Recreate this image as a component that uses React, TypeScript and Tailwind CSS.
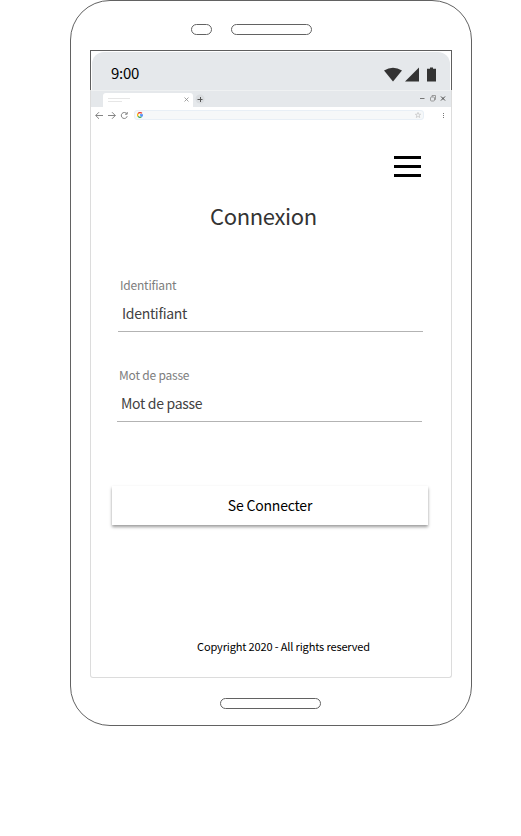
import React from "react";

function StatusBar() {
  return (
    <div className="h-[40px] border border-b-0 border-[#5e5e5e] bg-white pt-px pl-px pr-px">
      <div className="flex h-[38px] items-center rounded-t-[12px] bg-[#e5e8eb] pr-[13px] pl-[19px]">
        <span className="pt-[4px] font-['Noto_Sans_CJK_SC',sans-serif] text-[15px] leading-5 tracking-[-0.3px] text-black">9:00</span>
        <svg className="mt-[7px] ml-auto" width="53" height="15" viewBox="0 0 53 15" fill="#333">
          <path d="M0 3.5 Q9 -2.2 18 3.5 L9 14.5 Z" />
          <path d="M21 14.5 L35 .5 V14.5 Z" />
          <path d="M43 1.7 H46 V.5 H49 V1.7 H52 V14.5 H43 Z" />
        </svg>
      </div>
    </div>
  );
}

function BrowserBar() {
  return (
    <div className="flex h-[33px] flex-col">
      <div className="flex h-[17px] border-t border-[#eff1f2] bg-[#e5e8eb]">
        <div className="mt-[2px] ml-[12px] flex h-[14px] w-[90px] rounded-t-[3px] bg-white pt-[5px] pr-[4px] pl-[5px]">
          <div>
            <div className="h-px w-[22px] bg-[#e6e6e6]" />
            <div className="mt-[2px] h-px w-[14px] bg-[#e6e6e6]" />
          </div>
          <svg className="-mt-px ml-auto" width="5" height="5" viewBox="0 0 5 5" stroke="#8b8b8b" strokeWidth=".8">
            <path d="M.5 .5 L4.5 4.5 M4.5 .5 L.5 4.5" />
          </svg>
        </div>
        <svg className="mt-[3px] ml-[2px]" width="10" height="10" viewBox="0 0 10 10">
          <circle cx="5" cy="5" r="4.5" fill="#dadde0" />
          <path d="M2.5 5.5 H7.5 M5.5 3 V8" stroke="#555" />
        </svg>
        <svg className="mt-[3px] mr-[5px] ml-auto" width="27" height="9" viewBox="0 0 27 9" fill="none">
          <path d="M1 4.5 H5.5" stroke="#777" />
          <rect x="11.5" y="3" width="4" height="4" rx="1" stroke="#888" strokeWidth=".8" />
          <path d="M13 3 V1.5 H16.5 V5.5 H15.5" stroke="#888" strokeWidth=".8" />
          <path d="M22 2.5 L26 6.5 M26 2.5 L22 6.5" stroke="#444" />
        </svg>
      </div>
      <div className="flex h-[16px] items-center pr-[6px] pl-[4px]">
        <svg width="36" height="10" viewBox="0 0 36 10" fill="none" stroke="#777" strokeWidth=".9">
          <path d="M8 5.5 H.8 M4 2.2 L.7 5.5 L4 8.8" />
          <path d="M13 5.5 H20.3 M17 2.2 L20.3 5.5 L17 8.8" />
          <path d="M31.7 3.7 A3 3 0 1 0 32.2 6.2 M32.2 2 V4.2 H30" />
        </svg>
        <div className="ml-[3px] flex h-[10px] w-[290px] items-center justify-between rounded-[3px] border border-[#e8eff6] bg-[#f6f8f9] pr-[2px] pl-[2px]">
          <svg width="6" height="6" viewBox="0 0 6 6" fill="none" strokeWidth="1.3">
            <path d="M4.9 1.4 A2.3 2.3 0 0 0 1.1 1.6" stroke="#ea4335" />
            <path d="M1.1 1.6 A2.3 2.3 0 0 0 1.1 4.4" stroke="#fbbc05" />
            <path d="M1.1 4.4 A2.3 2.3 0 0 0 4.4 4.8" stroke="#34a853" />
            <path d="M4.4 4.8 Q5.3 4.2 5.3 3 H3" stroke="#4285f4" />
          </svg>
          <svg width="6" height="6" viewBox="0 0 6 6" fill="none" stroke="#bbb" strokeWidth=".6">
            <path d="M3 .4 L3.7 2.2 L5.6 2.3 L4.2 3.5 L4.7 5.5 L3 4.4 L1.3 5.5 L1.8 3.5 L.4 2.3 L2.3 2.2 Z" />
          </svg>
        </div>
        <svg className="ml-auto" width="3" height="7" viewBox="0 0 3 7" fill="#777">
          <path d="M1 1 H2 V2 H1 Z M1 3 H2 V4 H1 Z M1 5 H2 V6 H1 Z" />
        </svg>
      </div>
    </div>
  );
}

function Field({ label, className }: { label: string; className: string }) {
  return (
    <div className={className}>
      <div className="h-[22px] pl-[2px] text-[12px] leading-[16px] tracking-[-0.2px] text-[#7d7d7d]">{label}</div>
      <div className="h-[33px] w-[305px] border-b border-[#b3b3b3] pl-[4px] text-[14px] leading-[28px] tracking-[-0.3px] text-[#424242]">{label}</div>
    </div>
  );
}

export default function App() {
  return (
    <div className="h-[836px] w-[521px] overflow-hidden bg-white pl-[70px] font-['Noto_Sans_CJK_SC',sans-serif]">
      <div className="flex h-[726px] w-[402px] flex-col rounded-[40px] border border-[#626262] px-[19px]">
        <div className="flex h-[49px] gap-[19px] pt-[23px] pl-[100.5px]">
          <div className="h-[11px] w-[21px] rounded-full border border-[#626262]" />
          <div className="h-[11px] w-[81px] rounded-full border border-[#626262]" />
        </div>
        <StatusBar />
        <div className="h-[588px] w-[362px] rounded-b-[3px] border border-t-0 border-[#dcdcdc]">
          <BrowserBar />
          <div className="mt-[33px] ml-[303px] flex w-[27px] flex-col gap-[6px]">
            <div className="h-[3px] bg-black" />
            <div className="h-[3px] bg-black" />
            <div className="h-[3px] bg-black" />
          </div>
          <h1 className="mt-[23px] h-[31px] pl-[119px] text-[22px] leading-[30px] tracking-[-0.35px] text-[#333]">Connexion</h1>
          <Field label="Identifiant" className="mt-[46px] ml-[27px]" />
          <Field label="Mot de passe" className="mt-[35px] ml-[26px]" />
          <button className="mt-[64px] ml-[21px] flex h-[39px] w-[316px] items-center justify-center bg-white text-[14px] tracking-[-0.2px] text-black shadow-[0_2px_3px_rgba(0,0,0,0.4)]">
            Se Connecter
          </button>
          <p className="mt-[111px] pl-[106px] text-[11px] leading-[20px] tracking-[-0.14px] text-black">Copyright 2020 - All rights reserved</p>
        </div>
        <div className="mt-[20px] mr-px h-[11px] w-[101px] self-center rounded-full border border-[#626262]" />
      </div>
    </div>
  );
}
